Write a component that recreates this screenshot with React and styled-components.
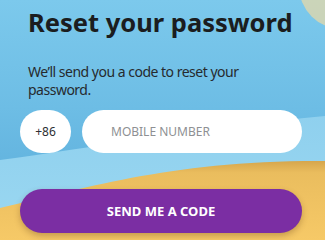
import React from 'react';
import styled, { createGlobalStyle } from 'styled-components';

const GlobalStyle = createGlobalStyle`
  html, body {
    margin: 0;
    padding: 0;
  }
  body {
    font-family: 'Noto Sans', 'Open Sans', sans-serif;
  }
`;

const Screen = styled.div`
  position: relative;
  width: 325px;
  height: 240px;
  overflow: hidden;
  background: linear-gradient(180deg, #7cc9ec 0%, #6dbde5 45%, #63b4df 70%);
`;

const Backdrop = styled.svg`
  position: absolute;
  inset: 0;
  width: 325px;
  height: 240px;
`;

const Content = styled.div`
  position: relative;
  display: flex;
  flex-direction: column;
  padding: 6px 23px 0 20px;
`;

const Title = styled.h1`
  margin: 0 0 0 8px;
  font-size: 25.5px;
  line-height: 32px;
  font-weight: 700;
  color: #1b1d20;
`;

const Lead = styled.p`
  margin: 25px 0 0 8px;
  max-width: 225px;
  font-size: 14px;
  line-height: 18px;
  letter-spacing: -0.5px;
  color: #262a2e;
`;

const Row = styled.div`
  display: flex;
  gap: 11px;
  margin-top: 11px;
`;

const Pill = styled.div`
  height: 43px;
  width: ${p => (p.$grow ? 'auto' : '51px')};
  flex: ${p => (p.$grow ? 1 : 'none')};
  display: flex;
  align-items: center;
  justify-content: ${p => (p.$grow ? 'flex-start' : 'center')};
  padding-left: ${p => (p.$grow ? '29px' : '0')};
  box-sizing: border-box;
  background: #fff;
  border-radius: 22px;
  font-size: 12px;
  color: ${p => (p.$grow ? '#8e9093' : '#2d2f33')};
`;

const Button = styled.button`
  margin-top: 36px;
  height: 44px;
  border: 0;
  border-radius: 22px;
  background: #7b2ea3;
  color: #fff;
  font-family: inherit;
  font-size: 13px;
  font-weight: 700;
  box-shadow: 0 3px 6px rgba(90, 50, 20, 0.3);
`;

export default function App() {
  return (
    <>
      <GlobalStyle />
      <Screen>
        <Backdrop viewBox="0 0 325 240">
          <defs>
            <linearGradient id="sand" x1="0" y1="0" x2="0" y2="1">
              <stop offset="0" stopColor="#d6a64c" />
              <stop offset="0.15" stopColor="#eabd5e" />
              <stop offset="1" stopColor="#f6c967" />
            </linearGradient>
            <linearGradient id="sky" x1="0" y1="0" x2="0" y2="1">
              <stop offset="0" stopColor="#8fd0ee" />
              <stop offset="1" stopColor="#9bd8f1" />
            </linearGradient>
          </defs>
          <path d="M0 160 C 90 148, 200 128, 325 116 L325 240 L0 240 Z" fill="url(#sky)" />
          <path d="M0 208 C 80 190, 170 160, 325 161 L325 240 L0 240 Z" fill="url(#sand)" />
          <circle cx="342" cy="-14" r="43" fill="#e6d8a8" opacity="0.75" />
        </Backdrop>
        <Content>
          <Title>Reset your password</Title>
          <Lead>We’ll send you a code to reset your password.</Lead>
          <Row>
            <Pill>+86</Pill>
            <Pill $grow>MOBILE NUMBER</Pill>
          </Row>
          <Button>SEND ME A CODE</Button>
        </Content>
      </Screen>
    </>
  );
}
